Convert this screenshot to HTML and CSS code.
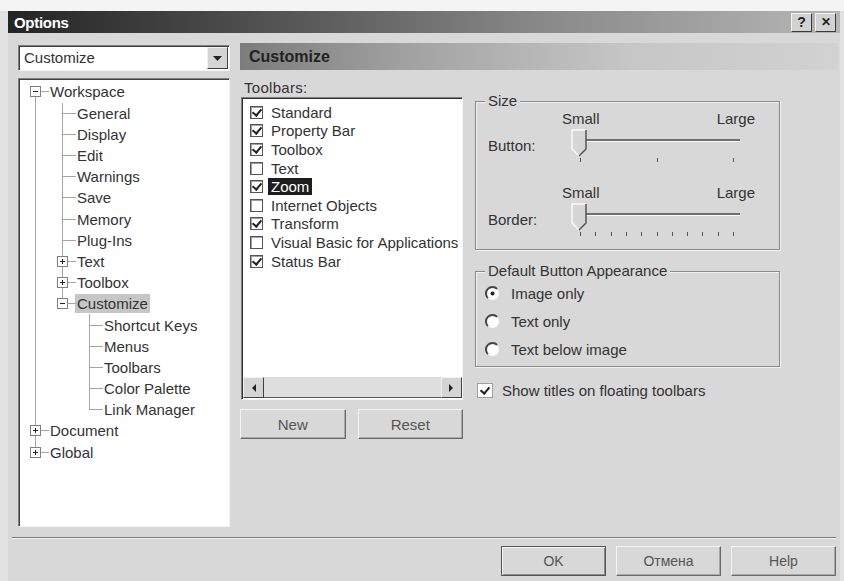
FILE: index.html
```html
<!DOCTYPE html>
<html lang="en">
<head>
<meta charset="utf-8">
<title>Options</title>
<link rel="stylesheet" href="styles.css">
</head>
<body>
<div class="paper-edge"></div>
<div class="dialog">
  <div class="titlebar">
    <span class="title">Options</span>
    <div class="caption-btns">
      <button class="cap-btn">?</button>
      <button class="cap-btn cap-close">&#x2715;</button>
    </div>
  </div>

  <div class="main">
    <!-- category picker and tree -->
    <div class="nav">
      <div class="combo">
        <span class="combo-text">Customize</span>
        <span class="combo-btn"><svg width="9" height="5" viewBox="0 0 9 5"><polygon points="0,0 9,0 4.5,5" fill="#222"/></svg></span>
      </div>
      <div class="tree">
        <div class="node"><i class="e first"><b class="pm"></b></i><span class="lbl">Workspace</span></div>
        <div class="node"><i class="g v"></i><i class="e"></i><span class="lbl">General</span></div>
        <div class="node"><i class="g v"></i><i class="e"></i><span class="lbl">Display</span></div>
        <div class="node"><i class="g v"></i><i class="e"></i><span class="lbl">Edit</span></div>
        <div class="node"><i class="g v"></i><i class="e"></i><span class="lbl">Warnings</span></div>
        <div class="node"><i class="g v"></i><i class="e"></i><span class="lbl">Save</span></div>
        <div class="node"><i class="g v"></i><i class="e"></i><span class="lbl">Memory</span></div>
        <div class="node"><i class="g v"></i><i class="e"></i><span class="lbl">Plug-Ins</span></div>
        <div class="node"><i class="g v"></i><i class="e"><b class="pm plus"></b></i><span class="lbl">Text</span></div>
        <div class="node"><i class="g v"></i><i class="e"><b class="pm plus"></b></i><span class="lbl">Toolbox</span></div>
        <div class="node"><i class="g v"></i><i class="e end"><b class="pm"></b></i><span class="lbl sel">Customize</span></div>
        <div class="node"><i class="g v"></i><i class="g"></i><i class="e"></i><span class="lbl">Shortcut Keys</span></div>
        <div class="node"><i class="g v"></i><i class="g"></i><i class="e"></i><span class="lbl">Menus</span></div>
        <div class="node"><i class="g v"></i><i class="g"></i><i class="e"></i><span class="lbl">Toolbars</span></div>
        <div class="node"><i class="g v"></i><i class="g"></i><i class="e"></i><span class="lbl">Color Palette</span></div>
        <div class="node"><i class="g v"></i><i class="g"></i><i class="e end"></i><span class="lbl">Link Manager</span></div>
        <div class="node"><i class="e"><b class="pm plus"></b></i><span class="lbl">Document</span></div>
        <div class="node"><i class="e end"><b class="pm plus"></b></i><span class="lbl">Global</span></div>
      </div>
    </div>

    <!-- property page -->
    <div class="page">
      <div class="page-head">Customize</div>
      <div class="page-body">
        <div class="toolbars-col">
          <div class="field-label">Toolbars:</div>
          <div class="listbox">
            <div class="list-items">
              <div class="item"><span class="cb on"></span><span>Standard</span></div>
              <div class="item"><span class="cb on"></span><span>Property Bar</span></div>
              <div class="item"><span class="cb on"></span><span>Toolbox</span></div>
              <div class="item"><span class="cb"></span><span>Text</span></div>
              <div class="item"><span class="cb on"></span><span class="hl">Zoom</span></div>
              <div class="item"><span class="cb"></span><span>Internet Objects</span></div>
              <div class="item"><span class="cb on"></span><span>Transform</span></div>
              <div class="item"><span class="cb"></span><span>Visual Basic for Applications</span></div>
              <div class="item"><span class="cb on"></span><span>Status Bar</span></div>
            </div>
            <div class="hscroll">
              <span class="sb-btn"><svg width="5" height="8" viewBox="0 0 5 8"><polygon points="5,0 5,8 1,4" fill="#222"/></svg></span>
              <span class="sb-track"></span>
              <span class="sb-btn"><svg width="5" height="8" viewBox="0 0 5 8"><polygon points="0,0 0,8 4,4" fill="#222"/></svg></span>
            </div>
          </div>
          <div class="btn-row">
            <button class="btn">New</button>
            <button class="btn">Reset</button>
          </div>
        </div>

        <div class="options-col">
          <div class="group size-group">
            <span class="legend">Size</span>
            <div class="scale"><span>Small</span><span>Large</span></div>
            <div class="slider-row">
              <span class="slider-label">Button:</span>
              <svg class="slider" width="175" height="36" viewBox="0 0 175 36">
                <rect x="5" y="12" width="165" height="2" fill="#6e6e6e"/>
                <rect x="5" y="14" width="165" height="1" fill="#fafafa"/>
                <rect x="10" y="31" width="1" height="4" fill="#555"/>
                <rect x="87" y="31" width="1" height="4" fill="#555"/>
                <rect x="163" y="31" width="1" height="4" fill="#555"/>
                <polygon points="2,3 16,3 16,22 9,29 2,22" fill="#d6d6d6"/>
                <polyline points="9,29 2,22 2,3 16,3" fill="none" stroke="#fafafa" stroke-width="1.5"/>
                <polyline points="16,3 16,22 9,29" fill="none" stroke="#555" stroke-width="1.5"/>
              </svg>
            </div>
            <div class="scale scale-2"><span>Small</span><span>Large</span></div>
            <div class="slider-row">
              <span class="slider-label">Border:</span>
              <svg class="slider" width="175" height="36" viewBox="0 0 175 36">
                <rect x="5" y="12" width="165" height="2" fill="#6e6e6e"/>
                <rect x="5" y="14" width="165" height="1" fill="#fafafa"/>
                <g fill="#555">
                  <rect x="10" y="31" width="1" height="4"/>
                  <rect x="25" y="31" width="1" height="4"/>
                  <rect x="41" y="31" width="1" height="4"/>
                  <rect x="56" y="31" width="1" height="4"/>
                  <rect x="71" y="31" width="1" height="4"/>
                  <rect x="87" y="31" width="1" height="4"/>
                  <rect x="102" y="31" width="1" height="4"/>
                  <rect x="117" y="31" width="1" height="4"/>
                  <rect x="132" y="31" width="1" height="4"/>
                  <rect x="148" y="31" width="1" height="4"/>
                  <rect x="163" y="31" width="1" height="4"/>
                </g>
                <polygon points="2,3 16,3 16,22 9,29 2,22" fill="#d6d6d6"/>
                <polyline points="9,29 2,22 2,3 16,3" fill="none" stroke="#fafafa" stroke-width="1.5"/>
                <polyline points="16,3 16,22 9,29" fill="none" stroke="#555" stroke-width="1.5"/>
              </svg>
            </div>
          </div>

          <div class="group appearance-group">
            <span class="legend">Default Button Appearance</span>
            <label class="radio">
              <svg width="15" height="15" viewBox="0 0 15 15"><circle cx="7.5" cy="7.5" r="6.5" fill="#fff"/><path d="M2.9 12.1A6.5 6.5 0 0 1 12.1 2.9" fill="none" stroke="#444" stroke-width="2"/><circle cx="7.5" cy="7.5" r="2" fill="#222"/></svg>
              <span>Image only</span>
            </label>
            <label class="radio">
              <svg width="15" height="15" viewBox="0 0 15 15"><circle cx="7.5" cy="7.5" r="6.5" fill="#fff"/><path d="M2.9 12.1A6.5 6.5 0 0 1 12.1 2.9" fill="none" stroke="#444" stroke-width="2"/></svg>
              <span>Text only</span>
            </label>
            <label class="radio">
              <svg width="15" height="15" viewBox="0 0 15 15"><circle cx="7.5" cy="7.5" r="6.5" fill="#fff"/><path d="M2.9 12.1A6.5 6.5 0 0 1 12.1 2.9" fill="none" stroke="#444" stroke-width="2"/></svg>
              <span>Text below image</span>
            </label>
          </div>

          <label class="check-row"><span class="cb big on"></span><span>Show titles on floating toolbars</span></label>
        </div>
      </div>
    </div>
  </div>

  <div class="separator"></div>
  <div class="footer">
    <button class="btn btn-default">OK</button>
    <button class="btn">Отмена</button>
    <button class="btn">Help</button>
  </div>
</div>
</body>
</html>
```

FILE: styles.css
```css
* { box-sizing: border-box; }

html, body { margin: 0; padding: 0; }

body {
  width: 844px;
  height: 581px;
  overflow: hidden;
  background: #e2e2e2;
  font-family: "Liberation Sans", Arial, sans-serif;
  font-size: 15px;
  color: #333;
}

.paper-edge { height: 11px; background: #f4f4f4; }

.dialog {
  margin-left: 8px;
  width: 832px;
  height: 570px;
  background: #d8d8d8;
}

/* caption */
.titlebar {
  height: 22px;
  display: flex;
  align-items: center;
  justify-content: space-between;
  padding: 0 4px 0 6px;
  background: linear-gradient(90deg, #242424 0%, #505050 30%, #8a8a8a 65%, #b6b6b6 100%);
}
.title { color: #fff; font-weight: bold; font-size: 15px; letter-spacing: -0.3px; }
.caption-btns { display: flex; gap: 3px; }
.cap-btn {
  width: 21px;
  height: 19px;
  padding: 0;
  border: 1px solid;
  border-color: #f4f4f4 #3a3a3a #3a3a3a #f4f4f4;
  background: #d2d2d2;
  font: bold 14px/17px "Liberation Sans", Arial, sans-serif;
  color: #222;
}
.cap-close { font-size: 12px; }

/* two main columns */
.main {
  display: grid;
  grid-template-columns: 212px 598px;
  column-gap: 10px;
  padding: 10px 0 0 10px;
  height: 494px;
}

.nav { display: flex; flex-direction: column; }

.combo {
  margin-top: 2px;
  height: 26px;
  display: flex;
  background: #fff;
  border: 1px solid;
  border-color: #808080 #f4f4f4 #f4f4f4 #808080;
  box-shadow: inset 1px 1px 0 #404040;
}
.combo-text { flex: 1; padding-left: 5px; line-height: 24px; }
.combo-btn {
  width: 21px;
  margin: 1px 1px 1px 0;
  background: #d4d4d4;
  border: 1px solid;
  border-color: #f0f0f0 #404040 #404040 #f0f0f0;
  display: flex;
  align-items: center;
  justify-content: center;
}

/* tree view */
.tree {
  margin-top: 7px;
  height: 449px;
  background: #fff;
  border: 1px solid;
  border-color: #808080 #f4f4f4 #f4f4f4 #808080;
  box-shadow: inset 1px 1px 0 #404040;
  padding: 2.4px 0 0 3px;
}
.node { display: flex; height: 21.2px; }
.node i { flex: 0 0 27px; position: relative; }
.g.v {
  background: linear-gradient(#a4a4a4, #a4a4a4) 13px 0 / 1px 100% no-repeat;
}
.e {
  background:
    linear-gradient(#a4a4a4, #a4a4a4) 13px 0 / 1px 100% no-repeat,
    linear-gradient(#a4a4a4, #a4a4a4) 13px 50% / 14px 1px no-repeat;
}
.e.end { background-size: 1px 50%, 14px 1px; }
.e.first {
  background-position: 13px 100%, 13px 50%;
  background-size: 1px 50%, 14px 1px;
}
.pm {
  position: absolute;
  left: 8px;
  top: calc(50% - 5.5px);
  width: 11px;
  height: 11px;
  border: 1px solid #808080;
  background: #fff;
}
.pm::before {
  content: "";
  position: absolute;
  left: 2px;
  top: 4px;
  width: 5px;
  height: 1px;
  background: #222;
}
.pm.plus::after {
  content: "";
  position: absolute;
  left: 4px;
  top: 2px;
  width: 1px;
  height: 5px;
  background: #222;
}
.lbl {
  align-self: center;
  line-height: 19px;
  padding: 0 2px;
  margin-left: -1px;
  white-space: nowrap;
}
.lbl.sel { background: #c6c6c6; }

/* property page */
.page { display: flex; flex-direction: column; }
.page-head {
  height: 27px;
  line-height: 27px;
  padding-left: 9px;
  font-weight: bold;
  font-size: 16px;
  color: #222;
  background: linear-gradient(90deg, #7c7c7c 0%, #a4a4a4 30%, #c6c6c6 65%, #d2d2d2 100%);
}
.page-body {
  display: grid;
  grid-template-columns: 223px 305px;
  column-gap: 12px;
  align-items: start;
}

.toolbars-col { display: flex; flex-direction: column; }
.field-label { margin-top: 9px; line-height: 18px; padding-left: 4px; letter-spacing: 0.3px; }

.listbox {
  margin-left: 1px;
  width: 222px;
  height: 303px;
  display: flex;
  flex-direction: column;
  background: #fff;
  border: 1px solid;
  border-color: #808080 #f4f4f4 #f4f4f4 #808080;
  box-shadow: inset 1px 1px 0 #303030;
  padding: 1px 0 1px 1px;
}
.list-items { padding: 4px 0 0 7px; }
.item { display: flex; align-items: center; height: 18.6px; white-space: nowrap; }

.cb {
  position: relative;
  flex: none;
  width: 13px;
  height: 13px;
  margin-right: 8px;
  background: #fff;
  border: 1px solid #555;
  box-shadow: inset 1px 1px 0 #a0a0a0;
}
.cb.on::after {
  content: "";
  position: absolute;
  left: 3px;
  top: 0px;
  width: 4px;
  height: 7px;
  border: solid #222;
  border-width: 0 2px 2px 0;
  transform: rotate(40deg);
}
.hl { background: #1e1e1e; color: #fff; padding: 0 3px; margin-left: -3px; }

.hscroll { margin-top: auto; display: flex; height: 21px; }
.sb-btn {
  flex: none;
  width: 21px;
  background: #d4d4d4;
  border: 1px solid;
  border-color: #f0f0f0 #404040 #404040 #f0f0f0;
  display: flex;
  align-items: center;
  justify-content: center;
}
.sb-track { flex: 1; background: #dedede; border-bottom: 1px solid #555; }

.btn-row {
  margin-top: 9px;
  display: grid;
  grid-template-columns: 1fr 1fr;
  column-gap: 12px;
}
.btn {
  height: 30px;
  padding: 0;
  background: #d8d8d8;
  border: 1px solid;
  border-color: #f4f4f4 #6a6a6a #6a6a6a #f4f4f4;
  box-shadow: inset -1px -1px 0 #a8a8a8;
  font: 15px "Liberation Sans", Arial, sans-serif;
  color: #555;
}

/* group boxes */
.options-col { display: flex; flex-direction: column; }
.group {
  border: 1px solid #8a8a8a;
  box-shadow: inset 1px 1px 0 #f2f2f2, 1px 1px 0 #f2f2f2;
}
.legend {
  display: table;
  margin: -9px 0 0 9px;
  padding: 0 3px;
  line-height: 16px;
  background: #d8d8d8;
}
.size-group { margin-top: 31px; height: 149px; }
.scale {
  margin: 2px 0 0 86px;
  width: 193px;
  display: flex;
  justify-content: space-between;
  line-height: 16px;
}
.scale-2 { margin-top: 22px; }
.slider-row { display: flex; align-items: center; height: 36px; }
.slider-label { width: 94px; padding-left: 12px; }
.slider { display: block; flex: none; }

.appearance-group { margin-top: 21px; height: 96px; }
.radio {
  display: flex;
  align-items: center;
  gap: 11px;
  height: 28px;
  padding-left: 9px;
}
.radio svg { flex: none; }

.check-row {
  margin-top: 16px;
  display: flex;
  align-items: center;
  height: 15px;
  padding-left: 2px;
}
.cb.big {
  width: 16px;
  height: 15px;
  margin-right: 9px;
  border-color: #a0a0a0;
  box-shadow: none;
}
.cb.big.on::after { left: 4px; top: 1px; }

/* bottom */
.separator {
  margin: 10px 4px 0 4px;
  height: 2px;
  border-top: 1px solid #7a7a7a;
  border-bottom: 1px solid #f4f4f4;
}
.footer {
  margin-top: 7px;
  padding-right: 4px;
  display: flex;
  justify-content: flex-end;
  gap: 10px;
}
.footer .btn { width: 105px; font-size: 14px; }
.btn-default { border-color: #555; box-shadow: inset 1px 1px 0 #f4f4f4, inset -1px -1px 0 #8a8a8a; }
```
